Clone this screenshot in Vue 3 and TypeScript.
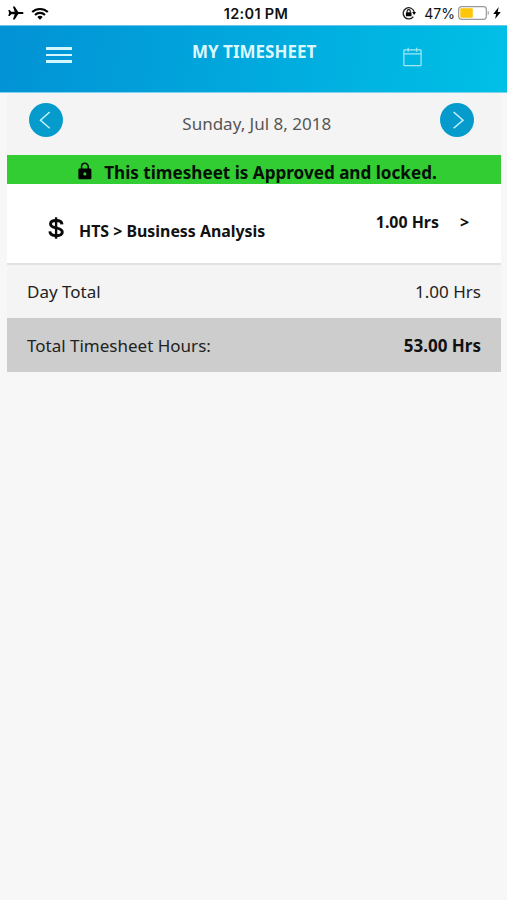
<script setup lang="ts">
interface Entry {
  project: string
  task: string
  hours: number
}

const dateLabel = 'Sunday, Jul 8, 2018'
const entries: Entry[] = [{ project: 'HTS', task: 'Business Analysis', hours: 1 }]
const dayTotal = entries.reduce((sum, e) => sum + e.hours, 0)
const timesheetTotal = 53
const hrs = (n: number): string => `${n.toFixed(2)} Hrs`
</script>

<template>
  <div class="screen">
    <div class="status">
      <div class="status-left">
        <svg class="plane" width="16" height="14" viewBox="0 0 16 14">
          <path d="M15.600 7c0 .7-.8 1.100-1.600 1.100h-3.700l-3.600 5.500H4.900L6.700 8.200H3.200L1.700 9.900H.3L1.100 7 .3 4.100h1.400l1.500 1.700h3.500L4.900.4h1.800l3.600 5.500H14c.8 0 1.600.4 1.600 1.100z" />
        </svg>
        <svg width="18" height="13" viewBox="0 0 18 13">
          <path d="M1.200 5.100a11.200 11.200 0 0 1 15.600 0M4 7.900a7.200 7.200 0 0 1 10 0" fill="none" stroke="#000" stroke-width="2.100" />
          <path d="M9 12.700 6.300 10a4 4 0 0 1 5.400 0z" />
        </svg>
      </div>
      <span class="time">12:01 PM</span>
      <div class="status-right">
        <svg class="rotation" width="14" height="14" viewBox="0 0 14 14">
          <path d="M11.300 10.600A5.600 5.600 0 1 1 12.200 6" fill="none" stroke="#222" stroke-width="1.300" />
          <path d="M10.200 6h3.800l-1.900 2.900z" />
          <rect x="3.900" y="6.200" width="5.600" height="4" rx=".5" />
          <path d="M5.100 6.500V5.200a1.600 1.600 0 0 1 3.200 0v1.300" fill="none" stroke="#111" stroke-width="1.100" />
        </svg>
        <span class="percent">47%</span>
        <svg class="battery" width="32" height="14" viewBox="0 0 32 14">
          <rect x=".7" y=".7" width="27.600" height="12.600" rx="2.800" fill="#fff" stroke="#999" stroke-width="1.200" />
          <rect x="2.300" y="2.300" width="12.500" height="9.400" rx="1" fill="#fdc60a" />
          <path d="M29.700 4.800c1.500.5 1.500 3.900 0 4.400z" fill="#999" />
        </svg>
        <svg class="bolt" width="8" height="12" viewBox="0 0 8 12">
          <path d="M5.700 0 .2 6.900h2.900L2.100 12l5.700-7.100H4.700z" />
        </svg>
      </div>
    </div>

    <header class="header">
      <button class="menu" aria-label="Menu"><i /><i /><i /></button>
      <h1>MY TIMESHEET</h1>
      <button class="calendar" aria-label="Calendar">
        <svg width="20" height="20" viewBox="0 0 20 20" fill="none" stroke="#a4e8f5" stroke-width="1.200">
          <rect x="1.900" y="2.900" width="17.200" height="15.800" rx=".8" />
          <path d="M1.900 6.900h17.200M6.200.8v4M14.700.8v4" />
        </svg>
      </button>
    </header>

    <main class="content">
      <nav class="day-nav">
        <button class="round" aria-label="Previous day">
          <svg width="34" height="34" viewBox="0 0 34 34"><path d="M20.700 9 11.500 17.200l9.200 8" /></svg>
        </button>
        <span class="date">{{ dateLabel }}</span>
        <button class="round" aria-label="Next day">
          <svg width="34" height="34" viewBox="0 0 34 34"><path d="m13.600 9 9.400 8.200-9.400 8" /></svg>
        </button>
      </nav>

      <div class="banner">
        <svg width="14" height="18" viewBox="0 0 14 18">
          <path d="M3.600 7.500V4.600a3.300 3.300 0 0 1 6.600 0v2.900" fill="none" stroke="#061006" stroke-width="1.500" />
          <path fill-rule="evenodd" d="M1.800 6.500h10.200c.8 0 1.400.6 1.400 1.400v8c0 .8-.6 1.400-1.400 1.400H1.800c-.8 0-1.400-.6-1.400-1.400v-8c0-.8.6-1.400 1.400-1.400zM6.900 10.300a1.600 1.600 0 1 0 0 3.200 1.600 1.600 0 0 0 0-3.200z" />
        </svg>
        <span>This timesheet is Approved and locked.</span>
      </div>

      <div v-for="entry in entries" :key="entry.task" class="entry">
        <svg class="dollar" width="16" height="22" viewBox="0 0 16 22">
          <path d="M14 7.300C13.800 4.500 11.600 3.500 8.100 3.500 4.600 3.500 2.500 4.700 2.500 7c0 2.500 2.300 3.200 5.600 3.900 3.800.8 6.200 1.600 6.200 4.100 0 2.400-2.400 3.700-6 3.700-3.900 0-6.200-1.400-6.500-4.300" fill="none" stroke="#0a0a0a" stroke-width="2.900" />
          <path d="M8.100.3v21.400" stroke="#0a0a0a" stroke-width="2.400" />
        </svg>
        <span class="name">{{ entry.project }} &gt; {{ entry.task }}</span>
        <span class="hours">{{ hrs(entry.hours) }}</span>
        <span class="more">&gt;</span>
      </div>

      <div class="row">
        <span>Day Total</span>
        <span>{{ hrs(dayTotal) }}</span>
      </div>
      <div class="row total">
        <span>Total Timesheet Hours:</span>
        <strong>{{ hrs(timesheetTotal) }}</strong>
      </div>
    </main>
  </div>
</template>

<style>
body {
  background: #f7f7f7;
}
</style>

<style scoped>
.screen {
  min-height: 900px;
  background: #f7f7f7;
  font-family: 'Noto Sans', sans-serif;
  color: #222;
}
svg {
  display: block;
  flex: none;
}
span,
strong,
h1 {
  white-space: nowrap;
}
button {
  border: 0;
  padding: 0;
  background: none;
}
.status {
  height: 25px;
  box-sizing: border-box;
  padding: 0 6px 0 8px;
  display: grid;
  grid-template-columns: 1fr auto 1fr;
  align-items: center;
  background: #fff;
  font-family: Inter, sans-serif;
  color: #111;
}
.status-left,
.status-right {
  display: flex;
  align-items: center;
  padding-top: 1px;
}
.status-left {
  gap: 7px;
}
.status-right {
  justify-content: flex-end;
  height: 24px;
}
.time {
  font-size: 14.500px;
  letter-spacing: 0.300px;
  font-weight: 600;
  padding: 2px 0 0 3px;
}
.percent {
  margin: 1px 3px 0 8px;
  font-size: 14px;
  line-height: 16px;
}
.bolt {
  margin-left: 3px;
}
.header {
  height: 68px;
  box-sizing: border-box;
  border-top: 1px solid #6ac5e8;
  border-bottom: 1px solid #7fd0ec;
  padding: 0 85px 0 46px;
  display: grid;
  grid-template-columns: 26px 1fr 20px;
  background: linear-gradient(100deg, #0292d5 0%, #00c0e6 100%);
}
.menu {
  display: flex;
  flex-direction: column;
  gap: 4px;
  padding-top: 21px;
}
.menu i {
  display: block;
  width: 26px;
  height: 2.500px;
  background: #d3f6ff;
}
h1 {
  margin: 15px 0 0 120px;
  font-size: 17px;
  line-height: 22px;
  font-weight: 700;
  color: #dcf8ff;
}
.calendar {
  padding-top: 21px;
  align-self: start;
}
.content {
  margin: 0 6px 0 7px;
}
.day-nav {
  height: 62px;
  box-sizing: border-box;
  padding: 10px 26.500px 0 22px;
  display: flex;
  justify-content: space-between;
  align-items: flex-start;
  background: #f4f4f4;
}
.round {
  width: 34px;
  height: 34px;
  border-radius: 50%;
  background: #059bcc;
}
.round path {
  fill: none;
  stroke: #c8f1fc;
  stroke-width: 1.500;
}
.date {
  padding: 9px 0 0 11px;
  margin-right: 1px;
  font-size: 17px;
  line-height: 24px;
  color: #555;
}
.banner {
  height: 29px;
  display: flex;
  justify-content: center;
  align-items: center;
  gap: 12px;
  padding-left: 7px;
  box-sizing: border-box;
  background: #32cd32;
  color: #061006;
  font-size: 17.100px;
  line-height: 22px;
  font-weight: 700;
}
.banner svg {
  margin-top: 3px;
}
.banner span {
  padding-top: 7px;
}
.entry {
  height: 81px;
  box-sizing: border-box;
  padding: 0 32px 0 41px;
  display: flex;
  background: #fff;
  border-bottom: 2px solid #e2e2e2;
  color: #111;
  font-size: 15.900px;
  font-weight: 700;
  line-height: 20px;
}
.dollar {
  margin: 33px 15px 0 0;
}
.name {
  flex: 1;
  padding-top: 37px;
}
.hours,
.more {
  padding-top: 28px;
}
.more {
  margin-left: 21px;
}
.row {
  height: 53px;
  box-sizing: border-box;
  padding: 0 20px 1px;
  display: flex;
  align-items: center;
  justify-content: space-between;
  background: #f4f4f4;
  font-size: 17px;
}
.row.total {
  height: 54px;
  padding-bottom: 0;
  background: #cdcdcd;
}
.total strong {
  color: #111;
}
</style>
